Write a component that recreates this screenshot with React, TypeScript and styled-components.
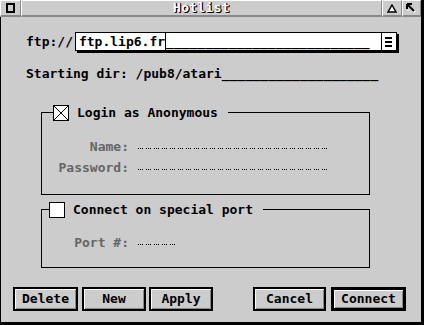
import React from 'react';
import styled, { createGlobalStyle } from 'styled-components';

const GlobalStyle = createGlobalStyle`
  html, body {
    margin: 0;
    padding: 0;
    background: #cccccc;
  }
  body {
    font-family: "DejaVu Sans Mono", "Liberation Mono", monospace;
  }
`;

const Window = styled.div`
  width: 424px;
  height: 325px;
  box-sizing: border-box;
  background: #cccccc;
  border-right: 3px solid #000;
  display: flex;
  flex-direction: column;
  font: bold 13px/16px "DejaVu Sans Mono", "Liberation Mono", monospace;
  color: #000;
`;

const TitleBar = styled.div`
  display: flex;
  height: 17px;
  flex: none;
`;

const Gadget = styled.div<{ w?: number }>`
  box-sizing: border-box;
  height: 17px;
  width: ${(p) => (p.w ? `${p.w}px` : 'auto')};
  flex: ${(p) => (p.w ? 'none' : '1')};
  border-top: 1px solid #fff;
  border-left: 1px solid #fff;
  border-bottom: 2px solid #888;
  border-right: 1px solid #888;
  display: flex;
  align-items: center;
  justify-content: center;
  overflow: hidden;
`;

const Title = styled.span`
  color: #fff;
  line-height: 14px;
  text-shadow: 1px 1px 0 #000, 1px 0 0 #000;
  letter-spacing: 0.3px;
`;

const Body = styled.div`
  flex: 1;
  border-left: 1px solid #000;
  border-bottom: 3px solid #000;
  padding-top: 15px;
  display: flex;
  flex-direction: column;
`;

const Row = styled.div`
  display: flex;
  align-items: center;
  margin-left: 25px;
`;

const Label = styled.span`
  white-space: pre;
`;

const Field = styled.div`
  box-sizing: border-box;
  width: 322px;
  height: 19px;
  margin-left: 2px;
  background: #fff;
  border: 1px solid #000;
  box-shadow: 2px 2px 0 #000;
  display: flex;
  align-items: center;
  padding-left: 3px;
`;

const Cursor = styled.span`
  width: 1px;
  height: 17px;
  background: #000;
`;

const Blank = styled.span`
  white-space: pre;
  flex: 1;
`;

const PopupButton = styled.div`
  width: 14px;
  height: 17px;
  border-left: 1px solid #000;
  display: flex;
  align-items: center;
  justify-content: center;
`;

const DirRow = styled(Row)`
  margin-top: 15px;
`;

const Group = styled.fieldset<{ top: number; bottom: number }>`
  box-sizing: border-box;
  width: 329px;
  margin: ${(p) => p.top}px 0 0 40px;
  padding: 0 0 ${(p) => p.bottom}px 0;
  border: 1px solid #000;
  min-width: 0;
`;

const Legend = styled.legend<{ indent: number }>`
  display: flex;
  align-items: center;
  gap: 8px;
  margin-left: ${(p) => p.indent}px;
  padding: 0 10px 0 0;
  height: 17px;
`;

const Check = styled.span`
  box-sizing: border-box;
  width: 16px;
  height: 16px;
  background: #fff;
  border: 1px solid #000;
  display: flex;
`;

const FormRow = styled.div<{ gap: number }>`
  display: flex;
  align-items: center;
  margin-top: ${(p) => p.gap}px;
  height: 16px;
`;

const DimLabel = styled.span`
  width: 87px;
  text-align: right;
  color: #666;
  white-space: pre;
`;

/* disabled edit field: the GEM template shows as groups of tiny dots */
const DotField = styled.span<{ chars: number }>`
  width: ${(p) => p.chars * 8}px;
  height: 1px;
  margin: 3px 0 0 9px;
  background: repeating-linear-gradient(
    90deg,
    #000 0 1px,
    transparent 1px 2px,
    #000 2px 3px,
    transparent 3px 4px,
    #000 4px 5px,
    transparent 5px 8px
  );
`;

const ButtonBar = styled.div`
  display: flex;
  margin: 19px 0 0 12px;
`;

const Button = styled.button<{ w: number; gap: number; isDefault?: boolean }>`
  box-sizing: border-box;
  width: ${(p) => p.w}px;
  height: 24px;
  margin-left: ${(p) => p.gap}px;
  padding: 0;
  background: #cccccc;
  border: ${(p) => (p.isDefault ? 3 : 2)}px solid #000;
  box-shadow: inset 1px 1px 0 #fff, inset -1px -1px 0 #888;
  font: bold 13px/16px "DejaVu Sans Mono", "Liberation Mono", monospace;
  color: #000;
`;

export default function App() {
  return (
    <>
      <GlobalStyle />
      <Window>
        <TitleBar>
          <Gadget w={21}>
            <svg width="9" height="10" viewBox="0 0 9 10">
              <rect x="1" y="1" width="7" height="8" fill="none" stroke="#000" strokeWidth="2" />
            </svg>
          </Gadget>
          <Gadget>
            <Title>Hotlist</Title>
          </Gadget>
          <Gadget w={20}>
            <svg width="10" height="9" viewBox="0 0 10 9">
              <path d="M5 1 L9 8 L1 8 Z" fill="#fff" stroke="#000" strokeWidth="1.5" />
            </svg>
          </Gadget>
          <Gadget w={19}>
            <svg width="11" height="10" viewBox="0 0 11 10">
              <path d="M2 2 L9 9" stroke="#fff" strokeWidth="2" />
              <path d="M1 1 L8 8" stroke="#000" strokeWidth="2" />
              <path d="M1 1 L6 1 M1 1 L1 6" stroke="#000" strokeWidth="2" />
              <path d="M2 7 L2 8 M4 4 L4 4" stroke="#fff" strokeWidth="1" />
            </svg>
          </Gadget>
        </TitleBar>
        <Body>
          <Row>
            <Label>ftp://</Label>
            <Field>
              <Label>ftp.lip6.fr</Label>
              <Cursor />
              <Blank>{'_'.repeat(26)}</Blank>
              <PopupButton>
                <svg width="7" height="10" viewBox="0 0 7 10">
                  <rect x="0" y="0" width="7" height="2" fill="#000" />
                  <rect x="0" y="4" width="7" height="2" fill="#000" />
                  <rect x="0" y="8" width="7" height="2" fill="#000" />
                </svg>
              </PopupButton>
            </Field>
          </Row>
          <DirRow>
            <Label>Starting dir: /pub8/atari{'_'.repeat(20)}</Label>
          </DirRow>

          <Group top={22} bottom={18}>
            <Legend indent={11}>
              <Check>
                <svg width="14" height="14" viewBox="0 0 14 14">
                  <path d="M0 0 L14 14 M14 0 L0 14" stroke="#000" strokeWidth="1" />
                </svg>
              </Check>
              <span>Login as Anonymous</span>
            </Legend>
            <FormRow gap={18}>
              <DimLabel>Name:</DimLabel>
              <DotField chars={24} />
            </FormRow>
            <FormRow gap={5}>
              <DimLabel>Password:</DimLabel>
              <DotField chars={24} />
            </FormRow>
          </Group>

          <Group top={6} bottom={16}>
            <Legend indent={7}>
              <Check />
              <span>Connect on special port</span>
            </Legend>
            <FormRow gap={17}>
              <DimLabel>Port #:</DimLabel>
              <DotField chars={5} />
            </FormRow>
          </Group>

          <ButtonBar>
            <Button w={65} gap={0}>Delete</Button>
            <Button w={64} gap={4}>New</Button>
            <Button w={64} gap={3}>Apply</Button>
            <Button w={73} gap={40}>Cancel</Button>
            <Button w={75} gap={5} isDefault>Connect</Button>
          </ButtonBar>
        </Body>
      </Window>
    </>
  );
}
